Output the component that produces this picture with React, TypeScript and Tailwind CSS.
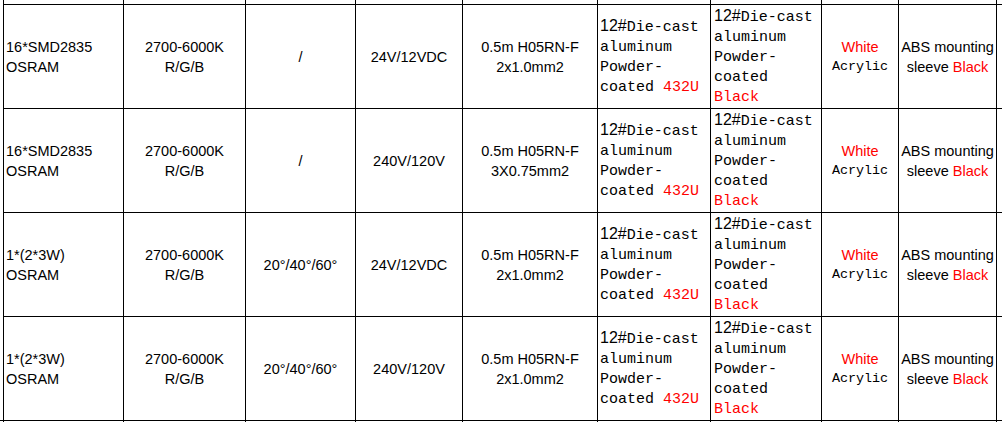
import React from "react";

const sans = "font-['Liberation_Sans',Arial,sans-serif] text-[14.5px] leading-[20px]";
const mono = "font-['Liberation_Mono','Courier_New',monospace] text-[15px] leading-[20px]";

type RowData = {
    led: string[];
    cct: string[];
    beam: string;
    volt: string;
    cable: string[];
};

const rows: RowData[] = [
    { led: ["16*SMD2835", "OSRAM"], cct: ["2700-6000K", "R/G/B"], beam: "/", volt: "24V/12VDC", cable: ["0.5m H05RN-F", "2x1.0mm2"] },
    { led: ["16*SMD2835", "OSRAM"], cct: ["2700-6000K", "R/G/B"], beam: "/", volt: "240V/120V", cable: ["0.5m H05RN-F", "3X0.75mm2"] },
    { led: ["1*(2*3W)", "OSRAM"], cct: ["2700-6000K", "R/G/B"], beam: "20°/40°/60°", volt: "24V/12VDC", cable: ["0.5m H05RN-F", "2x1.0mm2"] },
    { led: ["1*(2*3W)", "OSRAM"], cct: ["2700-6000K", "R/G/B"], beam: "20°/40°/60°", volt: "240V/120V", cable: ["0.5m H05RN-F", "2x1.0mm2"] },
];

const widths = ["w-[120px]", "w-[122px]", "w-[110px]", "w-[107px]", "w-[135px]", "w-[113px]", "w-[111px]", "w-[77px]", "w-[98px]"];

const Cell = ({ w, className = "", children }: { w: string; className?: string; children?: React.ReactNode }) => (
    <div className={`${w} shrink-0 h-full border-l border-t border-black flex items-center overflow-hidden ${className}`}>
        {children}
    </div>
);

const Lines = ({ lines }: { lines: string[] }) => (
    <div>
        {lines.map((l) => (
            <div key={l} className="whitespace-nowrap">{l}</div>
        ))}
    </div>
);

const Prefix = () => <span className="font-['Liberation_Sans',Arial,sans-serif] text-[16px]">12#</span>;

const EmptyRow = ({ h, top }: { h: string; top: boolean }) => (
    <div className={`flex ${h}`}>
        <div className="w-[3px] shrink-0" />
        {widths.map((w) => (
            <div key={w} className={`${w} shrink-0 h-full border-l border-black ${top ? "" : "border-t"}`} />
        ))}
        <div className={`flex-1 h-full border-l border-black ${top ? "" : "border-t"}`} />
    </div>
);

export default function App() {
    return (
        <div className="w-[1002px] h-[422px] overflow-hidden bg-white text-black">
            <EmptyRow h="h-[4px]" top />
            {rows.map((r, i) => (
                <div key={i} className="flex h-[104px]">
                    <div className="w-[3px] shrink-0" />
                    <Cell w={widths[0]} className={`${sans} pl-[2px]`}>
                        <Lines lines={r.led} />
                    </Cell>
                    <Cell w={widths[1]} className={`${sans} justify-center text-center`}>
                        <Lines lines={r.cct} />
                    </Cell>
                    <Cell w={widths[2]} className={`${sans} justify-center text-center`}>
                        {r.beam}
                    </Cell>
                    <Cell w={widths[3]} className={`${sans} justify-center text-center`}>
                        {r.volt}
                    </Cell>
                    <Cell w={widths[4]} className={`${sans} justify-center text-center`}>
                        <Lines lines={r.cable} />
                    </Cell>
                    <Cell w={widths[5]} className={`${mono} pl-[2px]`}>
                        <div className="whitespace-nowrap">
                            <div><Prefix />Die-cast</div>
                            <div>aluminum</div>
                            <div>Powder-</div>
                            <div>coated <span className="text-[#ff0000]">432U</span></div>
                        </div>
                    </Cell>
                    <Cell w={widths[6]} className={`${mono} pl-[3px]`}>
                        <div className="whitespace-nowrap">
                            <div><Prefix />Die-cast</div>
                            <div>aluminum</div>
                            <div>Powder-</div>
                            <div>coated</div>
                            <div className="text-[#ff0000]">Black</div>
                        </div>
                    </Cell>
                    <Cell w={widths[7]} className="justify-center text-center">
                        <div className="whitespace-nowrap">
                            <div className={`${sans} text-[#ff0000]`}>White</div>
                            <div className="font-['Liberation_Mono','Courier_New',monospace] text-[13.4px] leading-[20px]">Acrylic</div>
                        </div>
                    </Cell>
                    <Cell w={widths[8]} className={`${sans} justify-center text-center`}>
                        <div className="whitespace-nowrap">
                            <div>ABS mounting</div>
                            <div>sleeve <span className="text-[#ff0000]">Black</span></div>
                        </div>
                    </Cell>
                    <Cell w="flex-1" />
                </div>
            ))}
            <div className="flex h-[2px] border-t border-black">
                <div className="w-[3px] shrink-0" />
                {widths.map((w) => (
                    <div key={w} className={`${w} shrink-0 h-full border-l border-black`} />
                ))}
                <div className="flex-1 h-full border-l border-black" />
            </div>
        </div>
    );
}
